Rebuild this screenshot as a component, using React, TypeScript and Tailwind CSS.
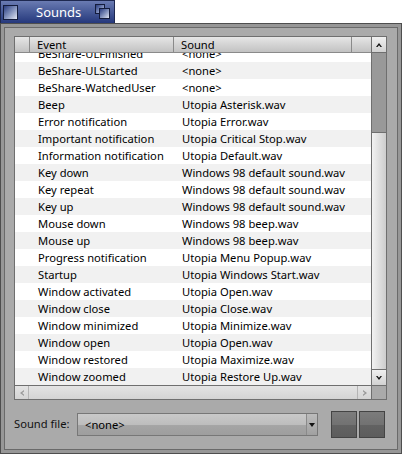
// Fenêtre « Sounds » façon Haiku.
const events: [string, string][] = [
  ['BeShare-ULFinished', '<none>'],
  ['BeShare-ULStarted', '<none>'],
  ['BeShare-WatchedUser', '<none>'],
  ['Beep', 'Utopia Asterisk.wav'],
  ['Error notification', 'Utopia Error.wav'],
  ['Important notification', 'Utopia Critical Stop.wav'],
  ['Information notification', 'Utopia Default.wav'],
  ['Key down', 'Windows 98 default sound.wav'],
  ['Key repeat', 'Windows 98 default sound.wav'],
  ['Key up', 'Windows 98 default sound.wav'],
  ['Mouse down', 'Windows 98 beep.wav'],
  ['Mouse up', 'Windows 98 beep.wav'],
  ['Progress notification', 'Utopia Menu Popup.wav'],
  ['Startup', 'Utopia Windows Start.wav'],
  ['Window activated', 'Utopia Open.wav'],
  ['Window close', 'Utopia Close.wav'],
  ['Window minimized', 'Utopia Minimize.wav'],
  ['Window open', 'Utopia Open.wav'],
  ['Window restored', 'Utopia Maximize.wav'],
  ['Window zoomed', 'Utopia Restore Up.wav'],
];

function Arrow({ dir, muted }: { dir: 'up' | 'down' | 'left' | 'right'; muted?: boolean }) {
  const pts = {
    up: '2,7 5,3 8,7 6.5,7 5,5.2 3.5,7',
    down: '2,3 5,7 8,3 6.5,3 5,4.8 3.5,3',
    left: '7,2 3,5 7,8 7,6.5 5.2,5 7,3.5',
    right: '3,2 7,5 3,8 3,6.5 4.8,5 3,3.5',
  }[dir];
  return (
    <svg width="10" height="10" viewBox="0 0 10 10">
      <polygon points={pts} fill={muted ? '#9a9a9a' : '#111'} />
    </svg>
  );
}

export default function App() {
  return (
    <div className="w-[402px] h-[454px] bg-white flex flex-col font-['Noto_Sans',sans-serif] text-[11.2px] text-black overflow-hidden">
      {/* onglet */}
      <div className="h-[23px] flex">
        <div className="w-[115px] h-[23px] border border-b-0 border-[#1e2850] bg-gradient-to-b from-[#6a7bb2] to-[#26387c] flex items-center pl-[2px] pr-[3px]">
          <div className="w-[15px] h-[15px] border border-[#141c3c] bg-gradient-to-br from-[#2c3d80] to-[#e4e8f4]" />
          <span className="ml-[18px] text-white text-[13px] leading-none">Sounds</span>
          <div className="ml-auto relative w-[16px] h-[16px]">
            <div className="absolute left-0 top-0 w-[10px] h-[10px] border border-[#141c3c] bg-gradient-to-br from-[#2c3d80] to-[#c8d0ea]" />
            <div className="absolute left-[4px] top-[4px] w-[11px] h-[11px] border border-[#141c3c] bg-gradient-to-br from-[#2c3d80] to-[#dfe4f2]" />
          </div>
        </div>
      </div>
      {/* cadre */}
      <div className="flex-1 border border-[#4e4e4e] bg-[#979797] p-[3px] flex">
        <div className="flex-1 border border-[#6a6a6a] bg-[#aaaaaa] flex flex-col pl-[9px] pr-[9px] pt-[8px]">
          {/* liste */}
          <div className="w-[373px] h-[364px] border border-[#6f6f6f] flex flex-col bg-[#aaaaaa]">
            <div className="flex h-[348px]">
              <div className="w-[356px] flex flex-col bg-white">
                <div className="h-[16px] shrink-0 flex items-center bg-gradient-to-b from-[#e6e6e6] to-[#c2c2c2] border-b border-[#8a8a8a] leading-none">
                  <div className="w-[15px] h-full border-r border-[#8a8a8a]" />
                  <div className="w-[144px] h-full flex items-center border-r border-[#8a8a8a] pl-[7px]">Event</div>
                  <div className="w-[178px] h-full flex items-center border-r border-[#8a8a8a] pl-[7px]">Sound</div>
                  <div className="flex-1" />
                </div>
                <div className="flex-1 overflow-hidden">
                  <div className="-mt-[8px]">
                    {events.map(([e, s], i) => (
                      <div key={e} className={`h-[17px] flex items-center leading-none ${i % 2 === 1 ? 'bg-[#f1f1f1]' : 'bg-white'}`}>
                        <span className="w-[160px] pl-[23px] whitespace-nowrap">{e}</span>
                        <span className="pl-[7px] whitespace-nowrap">{s}</span>
                      </div>
                    ))}
                  </div>
                </div>
              </div>
              {/* défilement vertical */}
              <div className="w-[15px] flex flex-col border-l border-[#6f6f6f] bg-[#999999]">
                <div className="h-[16px] border-b border-[#6f6f6f] bg-gradient-to-b from-[#f0f0f0] to-[#d2d2d2] flex items-center justify-center">
                  <Arrow dir="up" />
                </div>
                <div className="h-[79px]" />
                <div className="flex-1 border-y border-[#6f6f6f] bg-gradient-to-r from-[#f2f2f2] to-[#cdcdcd]" />
                <div className="h-[15px] bg-gradient-to-b from-[#f0f0f0] to-[#d2d2d2] flex items-center justify-center">
                  <Arrow dir="down" />
                </div>
              </div>
            </div>
            {/* défilement horizontal */}
            <div className="flex h-[14px] border-t border-[#6f6f6f]">
              <div className="w-[356px] flex bg-gradient-to-b from-[#e4e4e4] to-[#d4d4d4]">
                <div className="w-[14px] border-r border-[#b4b4b4] flex items-center justify-center">
                  <Arrow dir="left" muted />
                </div>
                <div className="flex-1" />
                <div className="w-[14px] border-l border-[#b4b4b4] flex items-center justify-center">
                  <Arrow dir="right" muted />
                </div>
              </div>
              <div className="flex-1 border-l border-[#6f6f6f] bg-[#aaaaaa]" />
            </div>
          </div>
          {/* fichier son */}
          <div className="flex items-center mt-[11px]">
            <span className="w-[63px] text-[#111]">Sound file:</span>
            <div className="w-[241px] h-[23px] border border-[#777777] flex">
              <div className="flex-1 bg-[linear-gradient(to_bottom,#c9c9c9_0%,#bdbdbd_50%,#a4a4a4_55%,#9e9e9e_100%)] pl-[7px] flex items-center leading-none border-r border-[#8a8a8a]">
                &lt;none&gt;
              </div>
              <div className="w-[10px] bg-gradient-to-b from-[#bcbcbc] to-[#a0a0a0] flex items-center justify-center">
                <svg width="6" height="4" viewBox="0 0 6 4"><polygon points="0,0 6,0 3,4" fill="#111" /></svg>
              </div>
            </div>
            <div className="ml-[13px] flex gap-[2px]">
              <div className="w-[26px] h-[27px] border border-[#444444] bg-[linear-gradient(to_bottom,#7c7c7c_0%,#727272_50%,#626262_52%,#5c5c5c_100%)]" />
              <div className="w-[26px] h-[27px] border border-[#444444] bg-[linear-gradient(to_bottom,#7c7c7c_0%,#727272_50%,#626262_52%,#5c5c5c_100%)]" />
            </div>
          </div>
        </div>
      </div>
    </div>
  );
}
